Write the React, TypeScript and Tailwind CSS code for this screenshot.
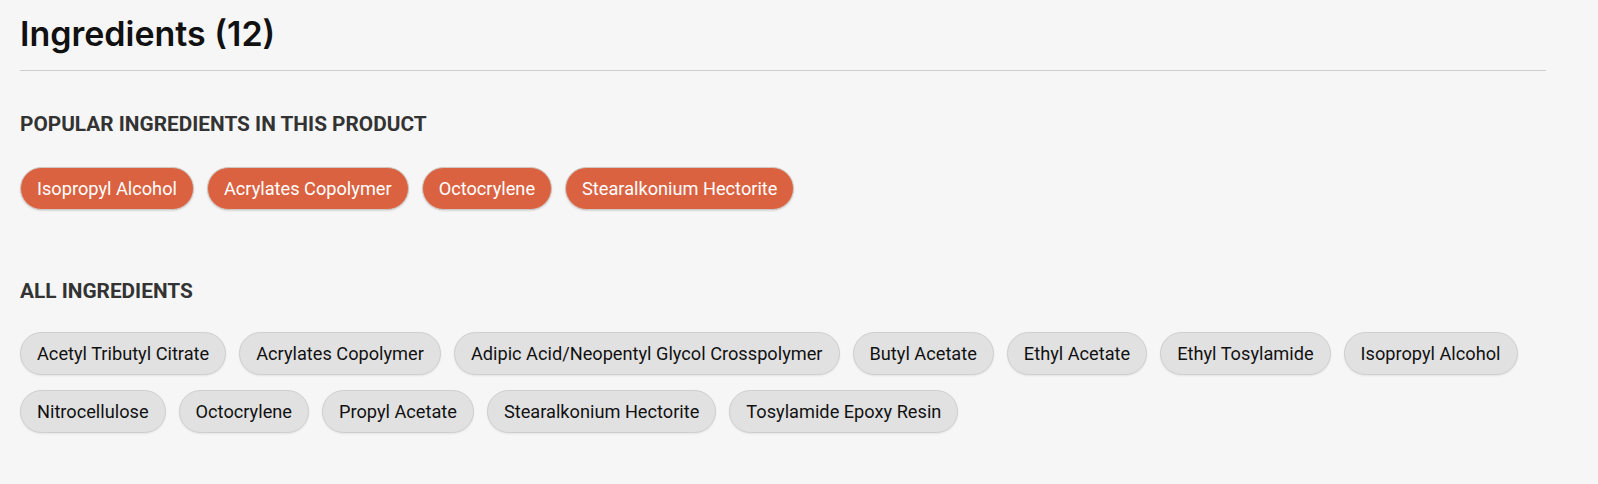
const popular = [
  "Isopropyl Alcohol",
  "Acrylates Copolymer",
  "Octocrylene",
  "Stearalkonium Hectorite",
];

const all = [
  "Acetyl Tributyl Citrate",
  "Acrylates Copolymer",
  "Adipic Acid/Neopentyl Glycol Crosspolymer",
  "Butyl Acetate",
  "Ethyl Acetate",
  "Ethyl Tosylamide",
  "Isopropyl Alcohol",
  "Nitrocellulose",
  "Octocrylene",
  "Propyl Acetate",
  "Stearalkonium Hectorite",
  "Tosylamide Epoxy Resin",
];

function Pill({ name, hot }: { name: string; hot?: boolean }) {
  return (
    <span
      className={
        hot
          ? "rounded-[22px] border border-[#d0c8c4] bg-[#db6241] px-4 py-2 text-[18.2px] leading-[25px] text-white shadow-[0_1px_2px_rgba(0,0,0,0.12)]"
          : "rounded-[22px] border border-[#cfcfcf] bg-[#e1e1e1] px-4 py-2 text-[18.2px] leading-[25px] text-[#111] shadow-[0_1px_2px_rgba(0,0,0,0.08)]"
      }
    >
      {name}
    </span>
  );
}

export default function App() {
  return (
    <div className="min-h-[484px] bg-[#f6f6f6] pt-[14px] font-['Roboto',sans-serif]">
      <div className="ml-5 w-[1526px]">
        <h1 className="font-['Inter',sans-serif] text-[34px] leading-10 font-semibold text-[#111]">
          Ingredients (12)
        </h1>
        <div className="mt-4 h-px bg-[#cdcdcd]" />

        <h2 className="mt-[39px] text-[20.8px] leading-7 font-bold uppercase text-[#333]">
          Popular ingredients in this product
        </h2>
        <div className="mt-[29px] flex flex-wrap gap-[13px]">
          {popular.map((p) => (
            <Pill key={p} name={p} hot />
          ))}
        </div>

        <h2 className="mt-[67px] text-[20.8px] leading-7 font-bold uppercase text-[#333]">
          All ingredients
        </h2>
        <div className="mt-[27px] flex flex-wrap gap-x-[13px] gap-y-[15px]">
          {all.map((p) => (
            <Pill key={p} name={p} />
          ))}
        </div>
      </div>
    </div>
  );
}
